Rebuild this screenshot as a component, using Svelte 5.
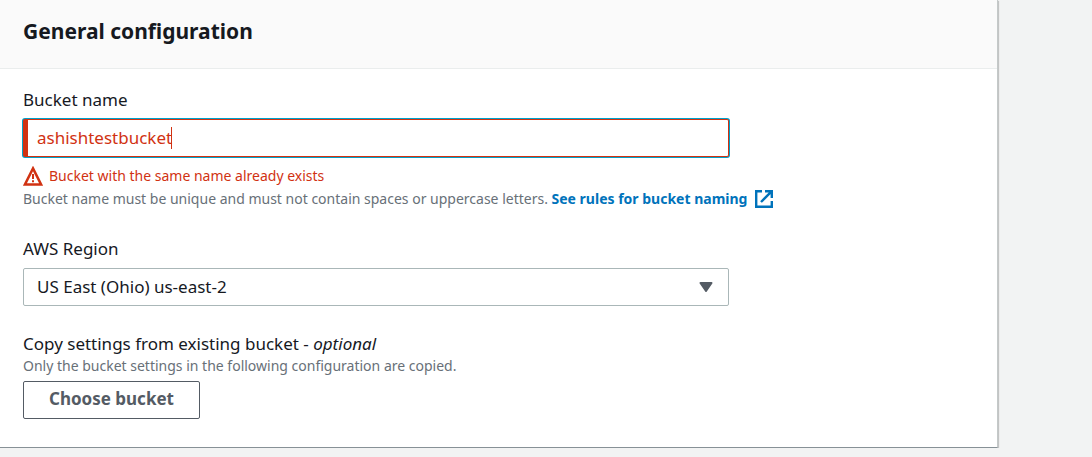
<script>
  let bucketName = $state('ashishtestbucket');
  let region = $state('us-east-2');
  let caretLeft = $state(0);
  let focused = $state(false);
  let nameInput;

  // Horizontal position of the text cursor inside the bucket name box.
  function placeCaret() {
    const style = getComputedStyle(nameInput);
    const context = document.createElement('canvas').getContext('2d');
    context.font = `${style.fontSize} ${style.fontFamily}`;
    const start = parseInt(style.borderLeftWidth) + parseInt(style.paddingLeft);
    const typed = nameInput.value.slice(0, nameInput.selectionEnd);
    caretLeft = Math.round(start + context.measureText(typed).width - nameInput.scrollLeft) - 1;
  }

  $effect(() => {
    nameInput.focus();
    nameInput.setSelectionRange(nameInput.value.length, nameInput.value.length);
    focused = true;
    placeCaret();
  });
</script>

<main class="page">
  <section class="panel" aria-labelledby="panel-title">
    <header class="panel-header">
      <h2 id="panel-title">General configuration</h2>
    </header>
    <div class="panel-body">
      <div class="field">
        <label for="bucket-name">Bucket name</label>
        <div class="control-wrap">
          <input
            id="bucket-name"
            class="control invalid"
            type="text"
            autocomplete="off"
            spellcheck="false"
            aria-invalid="true"
            aria-describedby="name-error name-hint"
            bind:this={nameInput}
            bind:value={bucketName}
            oninput={placeCaret}
            onkeyup={placeCaret}
            onclick={placeCaret}
            onfocus={() => (focused = true)}
            onblur={() => (focused = false)}
          />
          {#if focused}
            <span class="caret" style="left: {caretLeft}px"></span>
          {/if}
        </div>
        <p class="error" id="name-error">
          <svg class="warning" viewBox="0 0 20 20" aria-hidden="true">
            <path d="M10 2.4 18.2 18.6H1.8Z" fill="none" stroke="currentColor" stroke-width="2.5" />
            <path d="M10 8v5M10 14.2v2" fill="none" stroke="currentColor" stroke-width="2" />
          </svg>
          <span>Bucket with the same name already exists</span>
        </p>
        <p class="hint" id="name-hint">
          Bucket name must be unique and must not contain spaces or uppercase letters.
          <a href="#rules">See rules for bucket naming<svg class="external" viewBox="0 0 18 18" aria-hidden="true">
            <path d="M7 1.2H1.2v15.6h15.6V11M10 1.2h6.8V8M16.8 1.2 6 12" fill="none" stroke="currentColor" stroke-width="2.4" />
          </svg></a>
        </p>
      </div>

      <div class="field">
        <label for="region">AWS Region</label>
        <div class="control-wrap">
          <select id="region" class="control" bind:value={region}>
            <option value="us-east-2">US East (Ohio) us-east-2</option>
          </select>
          <svg class="arrow" viewBox="0 0 14 10" aria-hidden="true">
            <path d="M1.5 1h11L7 9Z" fill="currentColor" stroke="currentColor" stroke-width="2" stroke-linejoin="round" />
          </svg>
        </div>
      </div>

      <div class="field">
        <p class="title" id="copy-title">Copy settings from existing bucket - <em>optional</em></p>
        <p class="hint" id="copy-hint">Only the bucket settings in the following configuration are copied.</p>
        <button type="button" aria-describedby="copy-title copy-hint">Choose bucket</button>
      </div>
    </div>
  </section>
</main>

<style>
  :global(body) {
    margin: 0;
    background: #f2f3f3;
  }
  .page {
    padding-right: 94px;
    font-family: "Noto Sans", "Open Sans", sans-serif;
    font-size: 17px;
    line-height: 24px;
    color: #16191f;
  }
  .panel {
    background: #fff;
    box-shadow: 0 1px 1px #001c244d, 1px 1px 1px #00000026;
    border-right: 1px solid #c4c9c9;
    border-bottom: 1px solid #879196;
  }
  .panel-header {
    padding: 15px 23px 21px;
    background: #fafafa;
    border-bottom: 1px solid #eaeded;
  }
  h2 {
    margin: 0;
    font-size: 21px;
    line-height: 32px;
    font-weight: 700;
  }
  p {
    margin: 0;
  }
  .panel-body {
    display: flex;
    flex-direction: column;
    gap: 27px;
    padding: 19px 23px 28px;
  }
  .field {
    display: flex;
    flex-direction: column;
    align-items: flex-start;
  }
  label {
    margin-bottom: 7px;
  }
  .title {
    line-height: 22px;
  }
  .control-wrap {
    position: relative;
    width: 100%;
    max-width: 706px;
  }
  .control {
    display: block;
    appearance: none;
    box-sizing: border-box;
    width: 100%;
    height: 38px;
    padding: 0 13px;
    border: 1px solid #aab7b8;
    border-radius: 2px;
    background: #fff;
    color: #16191f;
    font: inherit;
  }
  .invalid {
    padding: 0 13px 2px 9px;
    border-color: #d13212;
    border-left-width: 5px;
    color: #d13212;
    caret-color: transparent;
  }
  .invalid:focus {
    outline: none;
    box-shadow: 0 0 0 1px #00a1c9;
  }
  .caret {
    position: absolute;
    top: 8px;
    width: 1px;
    height: 22px;
    background: #d13212;
    pointer-events: none;
  }
  .error,
  .hint {
    font-size: 14px;
    line-height: 22px;
  }
  .error {
    display: flex;
    align-items: center;
    gap: 6px;
    margin-top: 7px;
    line-height: 24px;
    color: #d13212;
  }
  .warning {
    width: 20px;
    height: 20px;
  }
  .hint {
    color: #687078;
  }
  a {
    color: #0073bb;
    font-weight: 700;
    text-decoration: none;
    white-space: nowrap;
  }
  .external {
    width: 18px;
    height: 18px;
    margin-left: 8px;
    vertical-align: -4px;
  }
  .arrow {
    position: absolute;
    top: 14px;
    right: 16px;
    width: 14px;
    height: 10px;
    color: #545b64;
    pointer-events: none;
  }
  button {
    height: 38px;
    margin-top: 4px;
    padding: 0 25px 2px;
    border: 1px solid #545b64;
    border-radius: 2px;
    background: #fff;
    color: #545b64;
    font: inherit;
    font-weight: 700;
  }
</style>
